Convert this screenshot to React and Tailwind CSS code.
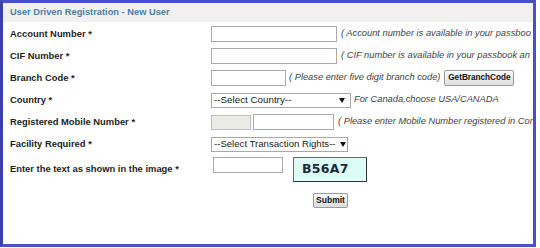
const Arrow = () => (
    <svg width="6" height="5" viewBox="0 0 6 5" className="shrink-0">
        <path d="M0 0 L6 0 L3 5 Z" fill="#111"/>
    </svg>
);

const Row = ({label, children}) => (
    <div className="flex items-center h-[22px] whitespace-nowrap">
        <div className="w-[201px] shrink-0 font-bold text-[9.4px] text-[#1e1e1e]">{label}</div>
        {children}
    </div>
);

const Hint = ({children, className = ''}) => (
    <span className={`italic text-[9.3px] text-[#444] whitespace-nowrap ${className}`}>{children}</span>
);

const Field = ({className = ''}) => (
    <input type="text" className={`h-[16px] border border-[#a9a9a9] bg-white shrink-0 ${className}`}/>
);

export default function App() {
    return (
        <div className="w-[540px] h-[248px] bg-white" style={{fontFamily: '"Liberation Sans", Arial, sans-serif'}}>
            <div className="w-[536px] h-[247px] border-[3px] border-[#4a50c8] border-l-[#3b3fa6] overflow-hidden">

                {/* Header */}
                <div className="h-[19px] bg-[#f0f0f0] flex items-center pl-[7px]">
                    <span className="font-bold text-[9.3px] text-[#4d7fa6]">User Driven Registration - New User</span>
                </div>

                <div className="pl-[7px] pt-[1px]">
                    <Row label="Account Number *">
                        <Field className="w-[126px]"/>
                        <Hint className="ml-[4px]">( Account number is available in your passboo</Hint>
                    </Row>
                    <Row label="CIF Number *">
                        <Field className="w-[126px]"/>
                        <Hint className="ml-[4px]">( CIF number is available in your passbook an</Hint>
                    </Row>
                    <Row label="Branch Code *">
                        <Field className="w-[75px]"/>
                        <Hint className="ml-[3px]">( Please enter five digit branch code)</Hint>
                        <button className="ml-[4px] w-[70px] h-[16px] shrink-0 border border-[#9a9a9a] bg-gradient-to-b from-[#fafafa] to-[#dedede] rounded-[2px] text-[8.2px] font-bold text-[#111] leading-none">
                            GetBranchCode
                        </button>
                    </Row>
                    <Row label="Country *">
                        <div className="w-[140px] h-[15px] shrink-0 border border-[#a9a9a9] bg-white flex items-center justify-between pl-[2px] pr-[5px] text-[9.8px] text-[#222] leading-none">
                            <span>--Select Country--</span>
                            <Arrow/>
                        </div>
                        <Hint className="ml-[3px]">For Canada,choose USA/CANADA</Hint>
                    </Row>
                    <Row label="Registered Mobile Number *">
                        <div className="w-[40px] h-[15px] shrink-0 border border-[#bdbdbd] bg-[#ebebe6]"/>
                        <Field className="w-[81px] ml-[2px] h-[15px]"/>
                        <Hint className="ml-[4px]">( Please enter Mobile Number registered in Cor</Hint>
                    </Row>
                    <Row label="Facility Required *">
                        <div className="w-[137px] h-[15px] shrink-0 border border-[#a9a9a9] bg-white flex items-center gap-[4px] pl-[2px] text-[9.6px] text-[#222] leading-none">
                            <span>--Select Transaction Rights--</span>
                            <Arrow/>
                        </div>
                    </Row>

                    {/* Captcha */}
                    <div className="flex items-start h-[28px]">
                        <div className="w-[201px] shrink-0 self-center font-bold text-[9.4px] text-[#1e1e1e] whitespace-nowrap">
                            Enter the text as shown in the image *
                        </div>
                        <Field className="w-[70px] ml-[2px] mt-[2px]"/>
                        <div className="ml-[10px] mt-[2px] w-[74px] h-[25px] bg-[#dcfcf6] border border-[#6a6a6a] border-r-[#333] border-b-[#333] flex items-center pl-[8px]">
                            <span className="font-bold text-[12.5px] tracking-[0.3px] text-[#1d2b38]" style={{fontFamily: '"DejaVu Sans", sans-serif'}}>B56A7</span>
                        </div>
                    </div>

                    <button className="mt-[10px] ml-[303px] w-[35px] h-[15px] border border-[#9a9a9a] bg-gradient-to-b from-[#fafafa] to-[#dcdcdc] rounded-[2px] text-[8.5px] font-bold text-[#111] leading-none">
                        Submit
                    </button>
                </div>
            </div>
        </div>
    );
}
